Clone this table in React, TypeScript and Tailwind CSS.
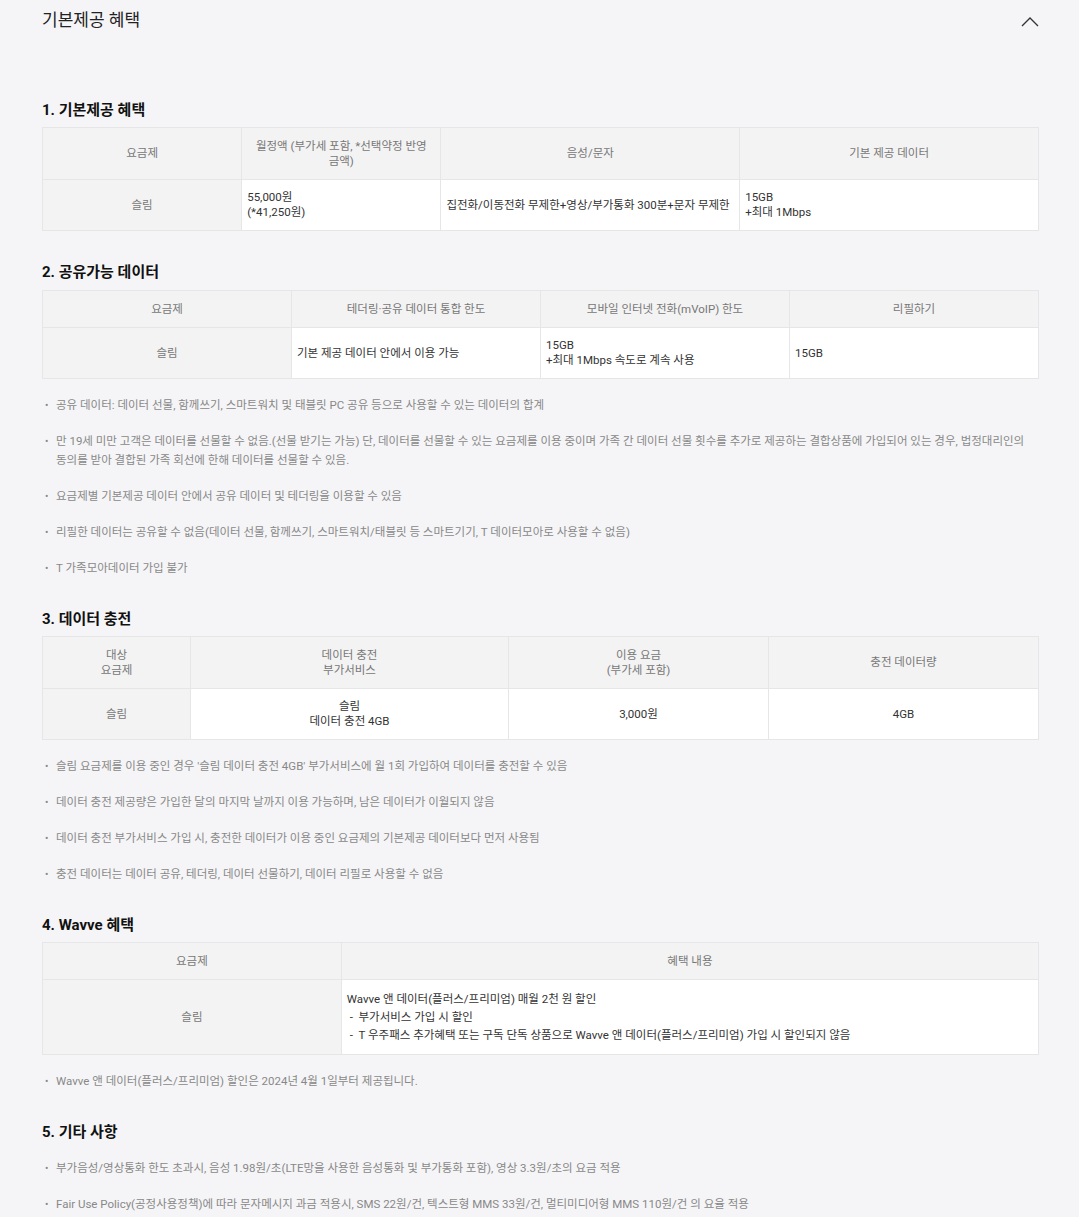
const th = 'border border-[#e6e6e6] bg-[#f3f3f3] px-3 py-[10.5px] text-center text-[11.5px] font-normal leading-[15px] text-[#777] break-keep';
const tdHead = 'border border-[#e6e6e6] bg-[#f3f3f3] px-3 py-[10px] text-center text-[11.5px] leading-[15px] text-[#777]';
const td = 'border border-[#e6e6e6] bg-white px-[5px] py-[10px] text-left text-[11.5px] leading-[15px] text-[#333] break-keep';
const tdC = 'border border-[#e6e6e6] bg-white px-[5px] py-[10px] text-center text-[11.5px] leading-[15px] text-[#333]';

const Heading = ({ children }: { children: React.ReactNode }) => (
  <h3 className="text-[15px] font-bold leading-[20px] text-[#111]">{children}</h3>
);

const Notes = ({ items }: { items: string[] }) => (
  <ul className="mt-[17px] flex flex-col gap-[17px]">
    {items.map((t) => (
      <li key={t} className="flex text-[11.5px] leading-[19px] text-[#888] break-keep">
        <span className="w-[14px] shrink-0 pl-[3px] text-[10px]">•</span>
        <span>{t}</span>
      </li>
    ))}
  </ul>
);

export default function App() {
  return (
    <div
      className="min-h-[1217px] bg-[#f5f5f7] pl-[42px] pr-[40px] pb-10"
      style={{ fontFamily: 'Roboto, "Noto Sans CJK KR", sans-serif' }}
    >
      {/* Accordion header */}
      <div className="flex h-[42px] items-center justify-between">
        <span className="text-[17px] text-[#222]">기본제공 혜택</span>
        <svg width="20" height="12" viewBox="0 0 20 12" className="mr-[-1px]">
          <path d="M2 11 L10 3 L18 11" fill="none" stroke="#333" strokeWidth="1.3" />
        </svg>
      </div>

      {/* 1 */}
      <div className="mt-[58px]">
        <Heading>1. 기본제공 혜택</Heading>
        <table className="mt-[7px] w-full table-fixed border-collapse">
          <colgroup>
            <col className="w-[20%]" />
            <col className="w-[20%]" />
            <col className="w-[30%]" />
            <col className="w-[30%]" />
          </colgroup>
          <thead>
            <tr>
              <th className={th}>요금제</th>
              <th className={th}>월정액 (부가세 포함, *선택약정 반영 금액)</th>
              <th className={th}>음성/문자</th>
              <th className={th}>기본 제공 데이터</th>
            </tr>
          </thead>
          <tbody>
            <tr>
              <td className={tdHead}>슬림</td>
              <td className={td}>55,000원<br />(*41,250원)</td>
              <td className={td}>집전화/이동전화 무제한+영상/부가통화 300분+문자 무제한</td>
              <td className={td}>15GB<br />+최대 1Mbps</td>
            </tr>
          </tbody>
        </table>
      </div>

      {/* 2 */}
      <div className="mt-[31px]">
        <Heading>2. 공유가능 데이터</Heading>
        <table className="mt-[8px] w-full table-fixed border-collapse">
          <tbody>
            <tr>
              <th className={th}>요금제</th>
              <th className={th}>테더링·공유 데이터 통합 한도</th>
              <th className={th}>모바일 인터넷 전화(mVoIP) 한도</th>
              <th className={th}>리필하기</th>
            </tr>
            <tr>
              <td className={tdHead}>슬림</td>
              <td className={td}>기본 제공 데이터 안에서 이용 가능</td>
              <td className={td}>15GB<br />+최대 1Mbps 속도로 계속 사용</td>
              <td className={td}>15GB</td>
            </tr>
          </tbody>
        </table>
        <Notes
          items={[
            '공유 데이터: 데이터 선물, 함께쓰기, 스마트워치 및 태블릿 PC 공유 등으로 사용할 수 있는 데이터의 합계',
            '만 19세 미만 고객은 데이터를 선물할 수 없음.(선물 받기는 가능) 단, 데이터를 선물할 수 있는 요금제를 이용 중이며 가족 간 데이터 선물 횟수를 추가로 제공하는 결합상품에 가입되어 있는 경우, 법정대리인의 동의를 받아 결합된 가족 회선에 한해 데이터를 선물할 수 있음.',
            '요금제별 기본제공 데이터 안에서 공유 데이터 및 테더링을 이용할 수 있음',
            '리필한 데이터는 공유할 수 없음(데이터 선물, 함께쓰기, 스마트워치/태블릿 등 스마트기기, T 데이터모아로 사용할 수 없음)',
            'T 가족모아데이터 가입 불가',
          ]}
        />
      </div>

      {/* 3 */}
      <div className="mt-[31px]">
        <Heading>3. 데이터 충전</Heading>
        <table className="mt-[7px] w-full table-fixed border-collapse">
          <colgroup>
            <col className="w-[148px]" />
            <col className="w-[318px]" />
            <col className="w-[260px]" />
            <col />
          </colgroup>
          <tbody>
            <tr>
              <th className={th}>대상<br />요금제</th>
              <th className={th}>데이터 충전<br />부가서비스</th>
              <th className={th}>이용 요금<br />(부가세 포함)</th>
              <th className={th}>충전 데이터량</th>
            </tr>
            <tr>
              <td className={tdHead}>슬림</td>
              <td className={tdC}>슬림<br />데이터 충전 4GB</td>
              <td className={tdC}>3,000원</td>
              <td className={tdC}>4GB</td>
            </tr>
          </tbody>
        </table>
        <Notes
          items={[
            "슬림 요금제를 이용 중인 경우 '슬림 데이터 충전 4GB' 부가서비스에 월 1회 가입하여 데이터를 충전할 수 있음",
            '데이터 충전 제공량은 가입한 달의 마지막 날까지 이용 가능하며, 남은 데이터가 이월되지 않음',
            '데이터 충전 부가서비스 가입 시, 충전한 데이터가 이용 중인 요금제의 기본제공 데이터보다 먼저 사용됨',
            '충전 데이터는 데이터 공유, 테더링, 데이터 선물하기, 데이터 리필로 사용할 수 없음',
          ]}
        />
      </div>

      {/* 4 */}
      <div className="mt-[31px]">
        <Heading>4. Wavve 혜택</Heading>
        <table className="mt-[7px] w-full table-fixed border-collapse">
          <colgroup>
            <col className="w-[30%]" />
            <col />
          </colgroup>
          <tbody>
            <tr>
              <th className={th}>요금제</th>
              <th className={th}>혜택 내용</th>
            </tr>
            <tr>
              <td className={tdHead}>슬림</td>
              <td className={`${td} !leading-[18px]`}>
                Wavve 앤 데이터(플러스/프리미엄) 매월 2천 원 할인
                <br />
                &nbsp;- &nbsp;부가서비스 가입 시 할인
                <br />
                &nbsp;- &nbsp;T 우주패스 추가혜택 또는 구독 단독 상품으로 Wavve 앤 데이터(플러스/프리미엄) 가입 시 할인되지 않음
              </td>
            </tr>
          </tbody>
        </table>
        <Notes items={['Wavve 앤 데이터(플러스/프리미엄) 할인은 2024년 4월 1일부터 제공됩니다.']} />
      </div>

      {/* 5 */}
      <div className="mt-[31px]">
        <Heading>5. 기타 사항</Heading>
        <Notes
          items={[
            '부가음성/영상통화 한도 초과시, 음성 1.98원/초(LTE망을 사용한 음성통화 및 부가통화 포함), 영상 3.3원/초의 요금 적용',
            'Fair Use Policy(공정사용정책)에 따라 문자메시지 과금 적용시, SMS 22원/건, 텍스트형 MMS 33원/건, 멀티미디어형 MMS 110원/건 의 요율 적용',
          ]}
        />
      </div>
    </div>
  );
}
